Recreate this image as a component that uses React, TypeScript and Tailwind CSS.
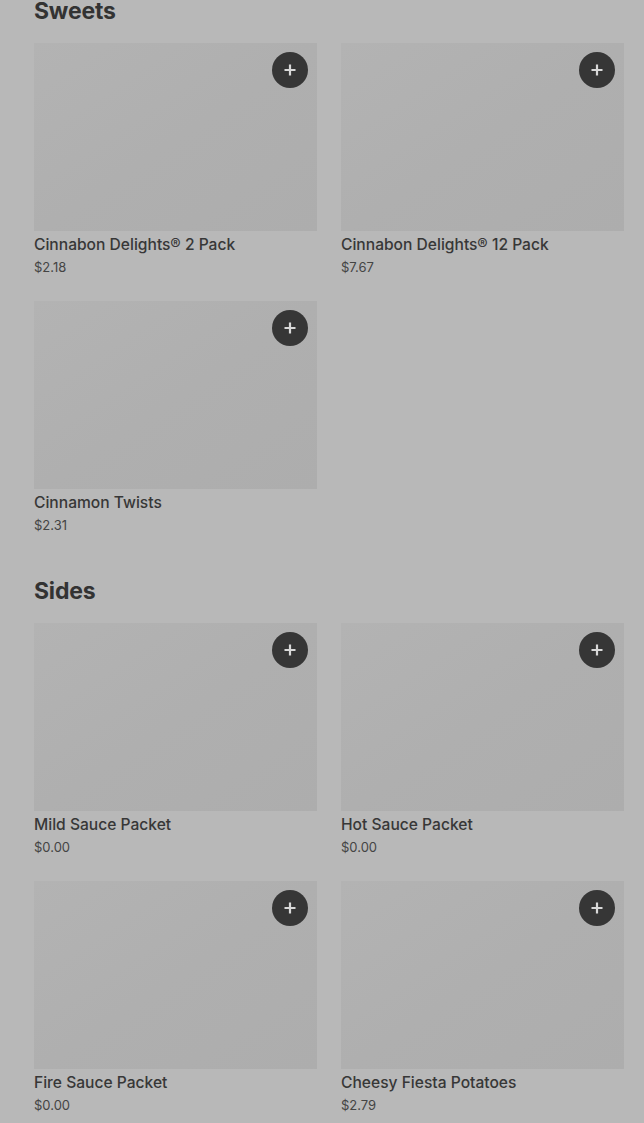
import React from "react";

type Item = { name: string; price: string };

const sections: { title: string; items: Item[] }[] = [
  {
    title: "Sweets",
    items: [
      { name: "Cinnabon Delights® 2 Pack", price: "$2.18" },
      { name: "Cinnabon Delights® 12 Pack", price: "$7.67" },
      { name: "Cinnamon Twists", price: "$2.31" },
    ],
  },
  {
    title: "Sides",
    items: [
      { name: "Mild Sauce Packet", price: "$0.00" },
      { name: "Hot Sauce Packet", price: "$0.00" },
      { name: "Fire Sauce Packet", price: "$0.00" },
      { name: "Cheesy Fiesta Potatoes", price: "$2.79" },
    ],
  },
];

function Card({ item }: { item: Item }) {
  return (
    <div className="flex flex-col">
      <div className="relative h-[188px] bg-gradient-to-br from-[#b3b3b3] via-[#afafaf] to-[#adadad]">
        <button className="absolute right-[9px] top-[9px] flex h-[36px] w-[36px] items-center justify-center rounded-full bg-[#363636]">
          <svg width="14" height="14" viewBox="0 0 14 14">
            <path d="M7 1.5v11M1.5 7h11" stroke="#d9d9d9" strokeWidth="2.2" />
          </svg>
        </button>
      </div>
      <div className="mt-[4px] text-[15.6px] leading-[20px] font-medium text-[#373737]">{item.name}</div>
      <div className="mt-[2px] text-[13px] leading-[20px] text-[#444]">{item.price}</div>
    </div>
  );
}

export default function App() {
  return (
    <div
      className="min-h-[1123px] w-full overflow-hidden bg-[#b8b8b8] px-[34px] pr-[20px]"
      style={{ fontFamily: "Inter, 'Noto Sans', sans-serif" }}
    >
      {sections.map((s, i) => (
        <div key={s.title} className={i === 0 ? "-mt-[5px]" : "mt-[40px]"}>
          <h2 className="text-[23px] leading-[32px] font-bold text-[#333] tracking-[-0.2px]">{s.title}</h2>
          <div className="mt-[16px] grid grid-cols-[283px_283px] gap-x-[24px] gap-y-[24px]">
            {s.items.map((it) => (
              <Card key={it.name} item={it} />
            ))}
          </div>
        </div>
      ))}
    </div>
  );
}
